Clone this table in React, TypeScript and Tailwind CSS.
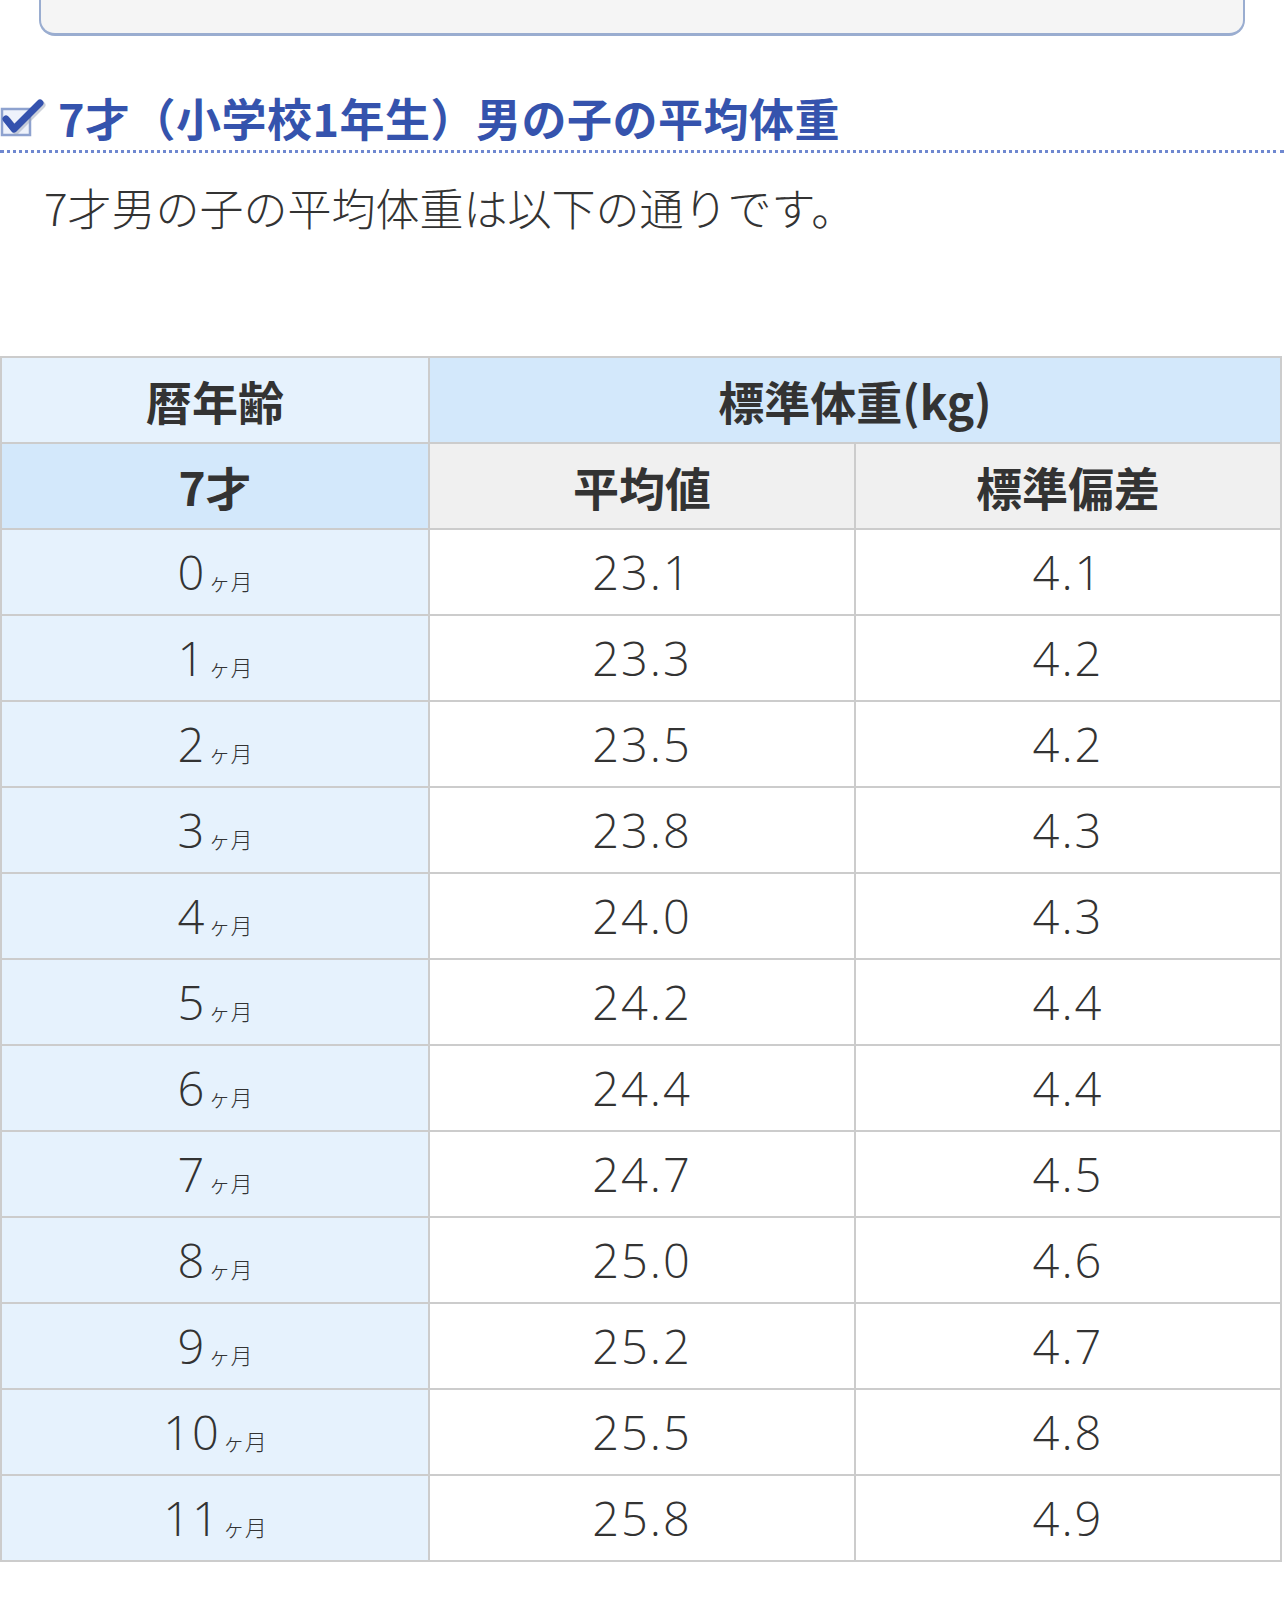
const rows: [string, string, string][] = [
  ["0", "23.1", "4.1"],
  ["1", "23.3", "4.2"],
  ["2", "23.5", "4.2"],
  ["3", "23.8", "4.3"],
  ["4", "24.0", "4.3"],
  ["5", "24.2", "4.4"],
  ["6", "24.4", "4.4"],
  ["7", "24.7", "4.5"],
  ["8", "25.0", "4.6"],
  ["9", "25.2", "4.7"],
  ["10", "25.5", "4.8"],
  ["11", "25.8", "4.9"],
]

function CheckIcon() {
  return (
    <svg width="46" height="44" viewBox="0 0 46 44" className="shrink-0">
      <rect x="2" y="14" width="28" height="26" fill="#eef2fb" stroke="#8ea2cf" strokeWidth="2.5" />
      <path d="M6 24 L14 34 L40 8" fill="none" stroke="#9aa3b5" strokeWidth="7" strokeLinecap="round" strokeLinejoin="round" transform="translate(2 2)" opacity="0.5" />
      <path d="M6 24 L14 34 L40 8" fill="none" stroke="#3452ae" strokeWidth="7" strokeLinecap="round" strokeLinejoin="round" />
    </svg>
  )
}

const num = { fontFamily: '"Open Sans", "Noto Sans CJK JP", sans-serif' }

export default function App() {
  const cell = "border-2 border-[#cccccc] h-[86px] p-0 text-center align-middle"
  const head = `${cell} text-[46px] font-bold`
  const val = `${cell} bg-white text-[47px] font-light tracking-[2px]`
  return (
    <div
      className="w-[1284px] h-[1624px] bg-white text-[#333333] overflow-hidden"
      style={{ fontFamily: '"Noto Sans CJK JP", "Noto Sans", sans-serif' }}
    >
      {/* top box (cut off) */}
      <div className="ml-[39px] w-[1206px] h-[36px] bg-[#f5f5f5] border-x-2 border-b-[3px] border-[#9aadd0] rounded-b-[16px]" />

      {/* heading */}
      <div className="mt-[56px] flex items-center gap-[12px] h-[50px]">
        <CheckIcon />
        <h2 className="text-[45px] font-bold text-[#3553ad] leading-none tracking-[0.5px] whitespace-nowrap">
          7才（小学校1年生）男の子の平均体重
        </h2>
      </div>
      <div className="mt-[8px] border-b-[3px] border-dotted border-[#6f88d0] w-full" />

      <p className="mt-[32px] ml-[44px] text-[44px] font-light leading-none text-[#333333] whitespace-nowrap">
        7才男の子の平均体重は以下の通りです。
      </p>

      {/* table */}
      <table className="mt-[127px] w-[1282px] border-collapse table-fixed">
        <thead>
          <tr>
            <th className={`${head} bg-[#e6f2fd] w-[428px]`}>暦年齢</th>
            <th colSpan={2} className={`${head} bg-[#d3e8fb]`}>
              標準体重(kg)
            </th>
          </tr>
          <tr>
            <th className={`${head} bg-[#d3e8fb]`}>7才</th>
            <th className={`${head} bg-[#f0f0f0] w-[428px]`}>平均値</th>
            <th className={`${head} bg-[#f0f0f0]`}>標準偏差</th>
          </tr>
        </thead>
        <tbody>
          {rows.map(([m, avg, sd]) => (
            <tr key={m}>
              <td className={`${cell} bg-[#e6f2fd]`}>
                <span className="text-[47px] font-light tracking-[2px]" style={num}>{m}</span>
                <span className="text-[22px] font-light ml-[2px]">ヶ月</span>
              </td>
              <td className={val} style={num}>{avg}</td>
              <td className={val} style={num}>{sd}</td>
            </tr>
          ))}
        </tbody>
      </table>
    </div>
  )
}
